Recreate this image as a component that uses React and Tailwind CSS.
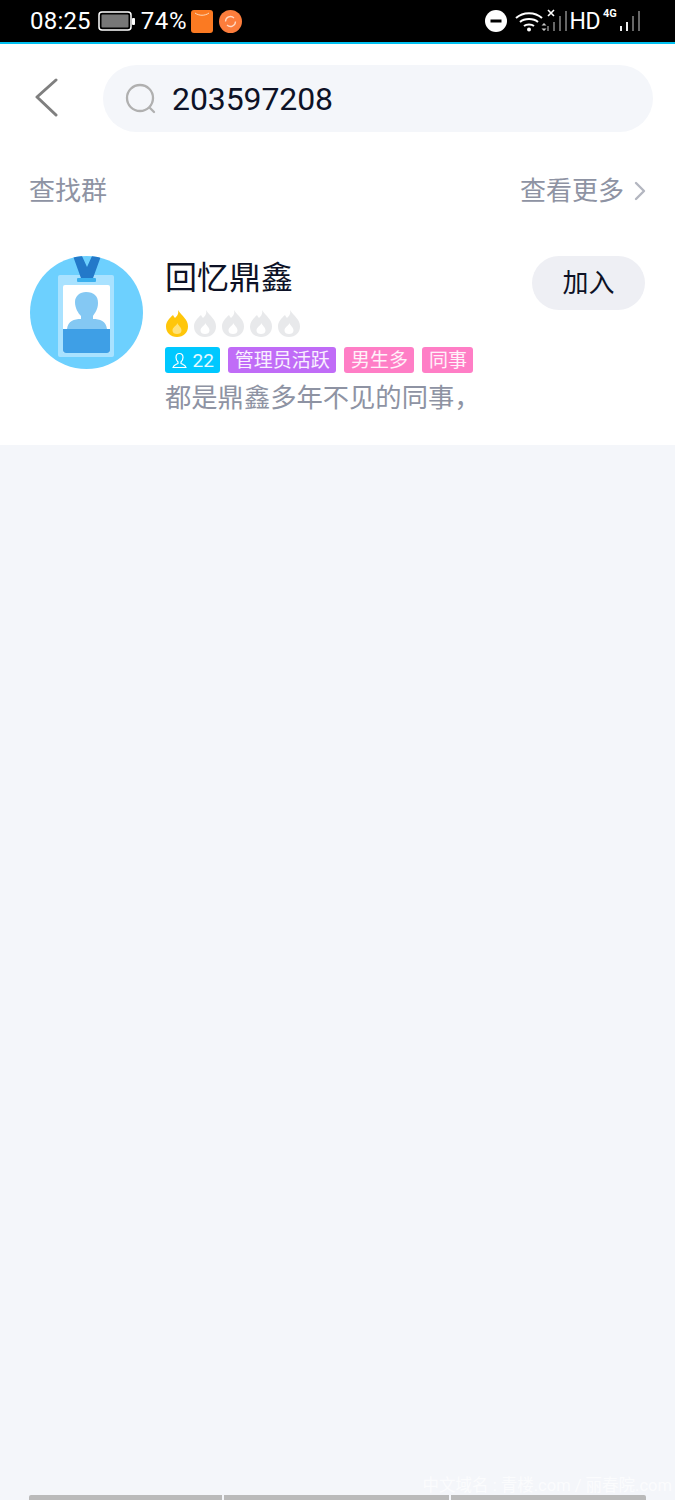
import { ChevronRight } from "lucide-react";

const cjk = { fontFamily: '"Roboto", "Noto Sans CJK SC", sans-serif' };

const Flame = ({ active }) => (
  <svg width="24" height="27" viewBox="0 0 24 27" className="block">
    <path
      d="M13 0c1 4 -1 6 -3 8c-1 -1 -1.500 -2 -2 -3C4 8.500 1 12 1 16.500C1 22.500 5.500 27 12 27s11 -4.500 11 -10.500C23 9.500 17 6 13 0z"
      fill={active ? "#ffc60a" : "#e8e9eb"}
    />
    <path
      d="M12.500 13c0.500 2.500 4 4 4 7.500c0 2.500 -2 3.500 -4.500 3.500s-4.500 -1 -4.500 -3.500c0 -3.500 4 -4.500 5 -7.500z"
      fill={active ? "#ffe27a" : "#ffffff"}
    />
  </svg>
);

const Tag = ({ color, children }) => (
  <span className={`h-[26px] px-[6.500px] rounded-[3px] flex items-center text-[19px] leading-none text-white/90 ${color}`}>
    {children}
  </span>
);

const Bars = ({ bright }) => (
  <svg width="20" height="24" viewBox="0 0 20 24" className="block">
    <rect x="0" y="17" width="2" height="5" fill={bright ? "#eee" : "#666"} />
    <rect x="6" y="13" width="2" height="9" fill={bright ? "#eee" : "#666"} />
    <rect x="12" y="7" width="2" height="15" fill="#666" />
    <rect x="18" y="2" width="2" height="20" fill="#666" />
  </svg>
);

const StatusBar = () => (
  <div className="h-[42px] bg-black flex items-center justify-between pl-[30px] pr-[35px] text-white">
    <div className="flex items-center">
      <span className="text-[24px] leading-none tracking-[0.2px]">08:25</span>
      <svg width="38" height="22" viewBox="0 0 38 22" className="ml-[7px]">
        <rect x="1" y="2" width="32" height="18" rx="3" fill="none" stroke="#fff" strokeWidth="1.500" />
        <rect x="3.500" y="4.500" width="27" height="13" rx="1" fill="#777" />
        <rect x="34" y="8" width="3" height="7" rx="1" fill="#fff" />
      </svg>
      <span className="text-[24px] leading-none ml-[5px] tracking-[0.6px]">74%</span>
      <svg width="22" height="23" viewBox="0 0 22 23" className="ml-[4px]">
        <rect width="22" height="23" rx="3" fill="#fb7a22" />
        <path d="M4 3c4 3 10 3 14 0" fill="none" stroke="#ffd9b8" strokeWidth="1" />
      </svg>
      <svg width="23" height="23" viewBox="0 0 23 23" className="ml-[6px]">
        <circle cx="11.500" cy="11.500" r="11.500" fill="#fc7d3c" />
        <path d="M6.500 11.500a5 5 0 0 1 8.500 -3.500M16.500 11.500a5 5 0 0 1 -8.500 3.500" fill="none" stroke="#ffd9c4" strokeWidth="1.300" />
      </svg>
    </div>
    <div className="flex items-center">
      <svg width="22" height="22" viewBox="0 0 22 22">
        <circle cx="11" cy="11" r="11" fill="#fff" />
        <rect x="5.500" y="9.500" width="11" height="3" fill="#000" />
      </svg>
      <svg width="32" height="22" viewBox="0 0 32 22" className="ml-[8px]">
        <path d="M1 8c7 -6.500 19 -6.500 26 0M5 12c4.500 -4 13.500 -4 18 0M9 16c2.500 -2 7.500 -2 10 0" fill="none" stroke="#fff" strokeWidth="2" />
        <circle cx="14" cy="19.500" r="2" fill="#fff" />
        <path d="M29 13l2.500 2.500h-5zM29 21l2.500 -2.500h-5z" fill="#ccc" />
      </svg>
      <div className="relative w-[19px] h-[24px]">
        <Bars />
        <svg width="8" height="8" viewBox="0 0 8 8" className="absolute left-[0px] top-[0px]">
          <path d="M1 1l6 6M7 1l-6 6" stroke="#fff" strokeWidth="1.600" />
        </svg>
      </div>
      <span className="text-[23px] leading-none ml-[3px] tracking-[-0.5px]">HD</span>
      <div className="relative w-[40px] h-[24px]">
        <span className="absolute left-[3px] -top-[1px] text-[11px] leading-[12px] font-bold">4G</span>
        <div className="absolute left-[20px] top-0">
          <Bars bright />
        </div>
      </div>
    </div>
  </div>
);

const Avatar = () => (
  <svg width="113" height="113" viewBox="0 0 113 113" className="shrink-0">
    <defs>
      <clipPath id="round">
        <circle cx="56.500" cy="56.500" r="56.500" />
      </clipPath>
    </defs>
    <g clipPath="url(#round)">
      <rect width="113" height="113" fill="#6dd0fe" />
      <rect x="28" y="19" width="56" height="82" rx="2" fill="#a9e2ff" />
      <path d="M43 0h9l5 11l5 -11h9l-9 25h-10z" fill="#2379c9" />
      <rect x="47" y="22" width="19" height="4" rx="1" fill="#3bb0ee" />
      <rect x="33" y="29" width="47" height="68" rx="2" fill="#fff" />
      <path d="M45 46c0 -6 5 -10 11 -10c8 0 12 4 12 11c0 6 -3 10 -5 13v3c7 0 13 2 14 10v3H37v-3c1 -8 7 -10 14 -10v-3c-3 -3 -6 -8 -6 -14z" fill="#84c8f3" />
      <path d="M33 73h47v21a3 3 0 0 1 -3 3H36a3 3 0 0 1 -3 -3z" fill="#3e9fe6" />
    </g>
  </svg>
);

export default function App() {
  return (
    <div className="relative h-[1500px] w-[675px] overflow-hidden bg-[#f4f6fa]" style={cjk}>
      <StatusBar />
      <div className="h-[2px] bg-[#00c0f0]" />

      <div className="bg-white h-[401px]">
        <div className="flex items-center pt-[21px] pl-[32px] pr-[22px]">
          <svg width="28" height="42" viewBox="0 0 28 42" className="shrink-0">
            <path d="M24 2L5 19l19 18" fill="none" stroke="#7f7f7f" strokeWidth="3" strokeLinecap="round" strokeLinejoin="round" />
          </svg>
          <div className="ml-[43px] flex-1 h-[67px] rounded-[34px] bg-[#f4f6fa] flex items-center pl-[22px]">
            <svg width="32" height="32" viewBox="0 0 32 32" className="shrink-0">
              <circle cx="15" cy="15" r="13" fill="none" stroke="#b0b0b0" strokeWidth="2.300" />
              <path d="M25 25l4 4" stroke="#b0b0b0" strokeWidth="2.300" strokeLinecap="round" />
            </svg>
            <span className="ml-[15px] text-[32px] leading-none tracking-[-0.1px] text-[#0d1226]">203597208</span>
          </div>
        </div>

        <div className="flex items-center justify-between pl-[29px] pr-[27px] mt-[43px] h-[32px]">
          <span className="text-[26px] leading-none text-[#8e93a3]">查找群</span>
          <div className="flex items-center">
            <span className="text-[26px] leading-none text-[#8e93a3]">查看更多</span>
            <ChevronRight className="w-[32px] h-[32px] -mr-[8px] text-[#b3b6c0]" strokeWidth={1.8} />
          </div>
        </div>

        <div className="flex items-start pl-[30px] pr-[30px] mt-[49px]">
          <Avatar />
          <div className="ml-[22px] flex-1">
            <div className="text-[32px] leading-[44px] text-[#0d1226]">回忆鼎鑫</div>
            <div className="flex gap-[4px] mt-[10px]">
              <Flame active />
              <Flame />
              <Flame />
              <Flame />
              <Flame />
            </div>
            <div className="flex gap-[8px] mt-[10px]">
              <Tag color="bg-[#00c8ff]">
                <svg width="15" height="17" viewBox="0 0 15 17" className="mr-[6px]">
                  <path d="M7.500 1.500c-2.500 0 -3.500 2 -3.500 4c0 2 1 3.500 2 4.500v1.500c-2 1 -4.500 1.500 -5 4h13c-0.500 -2.500 -3 -3 -5 -4V10c1 -1 2 -2.500 2 -4.500c0 -2 -1 -4 -3.500 -4z" fill="none" stroke="#fff" strokeWidth="1.200" />
                </svg>
                22
              </Tag>
              <Tag color="bg-[#c06cf7]">管理员活跃</Tag>
              <Tag color="bg-[#ff7ec6]">男生多</Tag>
              <Tag color="bg-[#ff7ec6]">同事</Tag>
            </div>
            <div className="text-[26.300px] leading-[36px] text-[#8e93a3] mt-[7px]">都是鼎鑫多年不见的同事，</div>
          </div>
          <button className="shrink-0 w-[113px] h-[54px] rounded-[27px] bg-[#eeeff4] text-[26px] leading-none text-[#0d1226]">加入</button>
        </div>
      </div>

      <div className="absolute right-[3px] bottom-[2px] text-[16.500px] leading-[24px] text-white/70 whitespace-nowrap">中文域名 : 青楼.com / 丽春院.com</div>
      <div className="absolute left-[29px] bottom-0 w-[617px] h-[5px] flex gap-[2px] rounded-t-[2px] overflow-hidden">
        <div className="w-[193px] bg-[#bababa]" />
        <div className="w-[225px] bg-[#bababa]" />
        <div className="flex-1 bg-[#bababa]" />
      </div>
    </div>
  );
}
